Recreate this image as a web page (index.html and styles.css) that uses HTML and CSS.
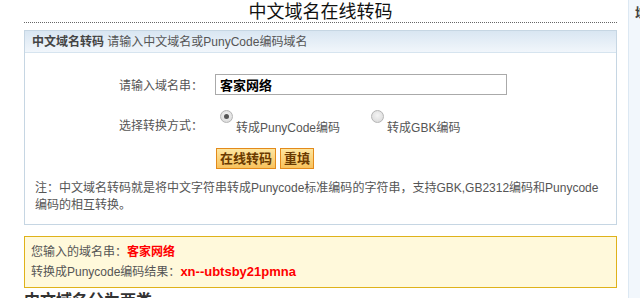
FILE: index.html
```html
<!DOCTYPE html>
<html lang="zh-CN">
<head>
    <meta charset="UTF-8">
    <title>中文域名在线转码</title>
    <link rel="stylesheet" href="styles.css">
</head>
<body>
    <div class="page">
        <div class="main">
            <h1 class="title">中文域名在线转码</h1>
            <div class="panel">
                <div class="panel-head"><b>中文域名转码</b> 请输入中文域名或PunyCode编码域名</div>
                <div class="panel-body">
                    <div class="row row-input">
                        <label class="row-label" for="domain">请输入域名串：</label>
                        <input id="domain" class="text-input" type="text" value="客家网络">
                    </div>
                    <div class="row row-radio">
                        <span class="row-label">选择转换方式：</span>
                        <span class="option"><span class="radio checked"></span><span class="option-text">转成PunyCode编码</span></span>
                        <span class="option"><span class="radio"></span><span class="option-text">转成GBK编码</span></span>
                    </div>
                    <div class="row row-buttons">
                        <button class="btn">在线转码</button>
                        <button class="btn">重填</button>
                    </div>
                    <p class="note">注：中文域名转码就是将中文字符串转成Punycode标准编码的字符串，支持GBK,GB2312编码和Punycode编码的相互转换。</p>
                </div>
            </div>
            <div class="result">
                <div>您输入的域名串：<span class="red">客家网络</span></div>
                <div>转换成Punycode编码结果：<span class="red latin">xn--ubtsby21pmna</span></div>
            </div>
            <h2 class="sub-title">中文域名分为两类</h2>
        </div>
        <div class="side">
            <div class="side-title">域名工具</div>
        </div>
    </div>
</body>
</html>
```

FILE: styles.css
```css
body {
    margin: 0;
    font-family: 'Liberation Sans', 'Noto Sans CJK SC', sans-serif;
    font-size: 12px;
    color: #555;
    background-color: #fff;
    overflow: hidden;
}
.page {
    display: flex;
    height: 298px;
}
.main {
    width: 593px;
    margin-left: 24px;
}
.title {
    margin: 0;
    height: 22px;
    font-family: 'Liberation Serif', 'Noto Sans CJK SC', serif;
    font-size: 18px;
    font-weight: normal;
    line-height: 24px;
    color: #111;
    text-align: center;
    border-bottom: 1px dotted #666;
}
.panel {
    margin-top: 7px;
    border: 1px solid #c6d6e3;
}
.panel-head {
    height: 21px;
    line-height: 22px;
    padding-left: 7px;
    background: linear-gradient(#d9e6f2, #f1f6fb);
    border-bottom: 1px solid #d6e4ef;
    color: #555;
}
.panel-head b {
    color: #444;
}
.panel-body {
    padding: 21px 0 0 10px;
}
.row {
    display: flex;
    align-items: center;
}
.row-label {
    width: 96px;
    margin-left: 84px;
}
.text-input {
    width: 282px;
    height: 17px;
    margin: 0;
    padding: 1px 4px;
    border: 1px solid #aaa;
    font-family: 'Liberation Sans', 'Noto Sans CJK SC', sans-serif;
    font-size: 13px;
    font-weight: bold;
    color: #000;
    outline: none;
}
.row-radio {
    margin-top: 17px;
    height: 24px;
}
.option {
    display: flex;
    align-items: flex-start;
    margin-right: 26px;
}
.radio {
    display: inline-block;
    width: 11px;
    height: 11px;
    margin: -3px 3px 0 5px;
    border: 1px solid #b5b5b5;
    border-radius: 50%;
    background: radial-gradient(circle at 50% 40%, #f4f4f4, #d6d6d6);
    position: relative;
}
.radio.checked::after {
    content: '';
    position: absolute;
    left: 3px;
    top: 3px;
    width: 5px;
    height: 5px;
    border-radius: 50%;
    background: #555;
}
.option-text {
    padding-top: 8px;
    line-height: 14px;
}
.row-buttons {
    margin-top: 12px;
    padding-left: 181px;
    gap: 4px;
}
.btn {
    height: 21px;
    padding: 0 3px;
    border: 1px solid #e38a1a;
    background: linear-gradient(#fde6a0, #f8c25c);
    font-family: 'Liberation Sans', 'Noto Sans CJK SC', sans-serif;
    font-size: 13px;
    font-weight: bold;
    line-height: 19px;
    color: #6a3a00;
    cursor: pointer;
}
.note {
    width: 572px;
    margin: 11px 0 0;
    padding-bottom: 10px;
    line-height: 17px;
}
.result {
    margin-top: 11px;
    padding: 5px 6px;
    line-height: 20px;
    background-color: #fff9db;
    border: 1px solid #dfb21a;
    color: #555;
}
.red {
    color: #f00;
    font-weight: bold;
}
.latin {
    font-size: 13px;
}
.sub-title {
    margin: 3px 0 0;
    font-size: 16px;
    line-height: 20px;
    color: #333;
}
.side {
    flex: 1;
    margin-left: 11px;
    background-color: #f2f7fc;
    border-left: 1px solid #dce8f3;
    overflow: hidden;
    white-space: nowrap;
}
.side-title {
    padding: 2px 0 0 6px;
    font-family: 'Liberation Serif', 'Noto Sans CJK SC', serif;
    font-size: 14px;
    font-weight: bold;
    color: #444;
}
```
